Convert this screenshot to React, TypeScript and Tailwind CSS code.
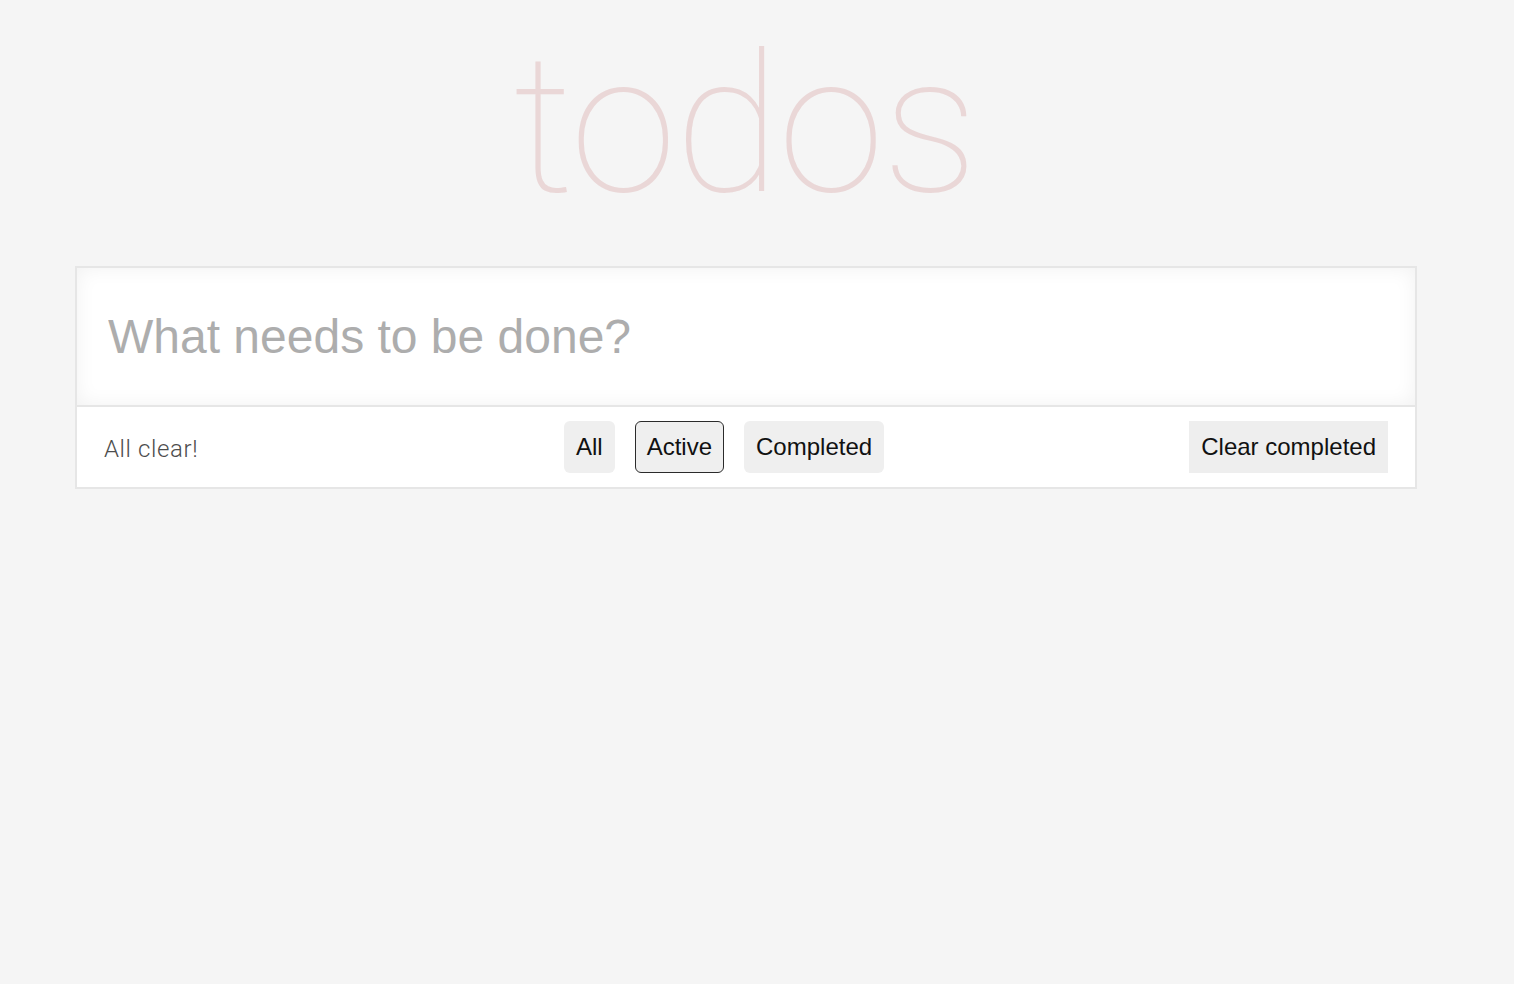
import React, { useState } from "react";

const FILTERS = ["All", "Active", "Completed"];

const App: React.FC = () => {
  const [filter, setFilter] = useState("Active");
  const [text, setText] = useState("");

  return (
    <div className="min-h-[984px] bg-[#f5f5f5] font-['Liberation_Sans',Arial,sans-serif] text-[#111]">
      {/* Title */}
      <h1 className="h-[266px] pt-[14px] pl-[513px] text-[193px] leading-[222px] font-thin tracking-[-2px] text-[rgba(175,47,47,0.15)] font-['Helvetica_Neue',Roboto,sans-serif]">
        todos
      </h1>

      <div className="ml-[75px] w-[1342px] border-2 border-[#e6e6e6] bg-white">
        {/* New todo */}
        <input
          value={text}
          onChange={(e) => setText(e.target.value)}
          placeholder="What needs to be done?"
          className="block w-full h-[139px] pl-[31px] pr-8 text-[48px] bg-white outline-none border-b-2 border-[#e6e6e6]
                     placeholder:text-[#adadad] shadow-[inset_0_0_20px_rgba(0,0,0,0.06)]"
        />

        {/* Footer */}
        <div className="flex items-center h-[80px] pl-[27px] pr-[27px]">
          <span className="w-[460px] pt-1 text-[24px] font-light tracking-[0.6px] text-[#4d4d4d] font-['Helvetica_Neue',Roboto,sans-serif]">
            All clear!
          </span>
          <div className="flex gap-5">
            {FILTERS.map((f) => (
              <button
                key={f}
                onClick={() => setFilter(f)}
                className={`h-[52px] px-[11px] text-[24px] leading-[28px] rounded-md bg-[#efefef] border
                            ${filter === f ? "border-[#2b2b2b]" : "border-transparent"}`}
              >
                {f}
              </button>
            ))}
          </div>
          <button className="ml-auto h-[52px] px-3 text-[24px] leading-[28px] bg-[#eeeeee]">
            Clear completed
          </button>
        </div>
      </div>
    </div>
  );
};

export default App;
